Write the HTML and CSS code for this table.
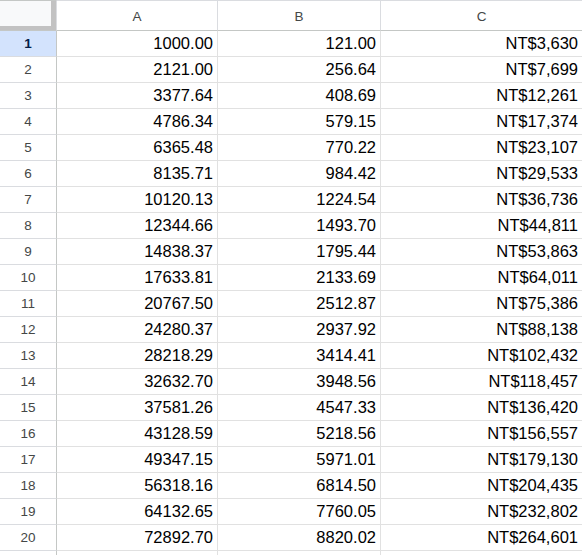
FILE: index.html
```html
<!DOCTYPE html>
<html>
<head>
<meta charset="utf-8">
<link rel="stylesheet" href="styles.css">
</head>
<body>
<div class="sheet">
  <div class="corner"></div>
  <div class="colhead">A</div>
  <div class="colhead">B</div>
  <div class="colhead">C</div>

  <div class="rowhead sel">1</div><div class="cell">1000.00</div><div class="cell">121.00</div><div class="cell">NT$3,630</div>
  <div class="rowhead">2</div><div class="cell">2121.00</div><div class="cell">256.64</div><div class="cell">NT$7,699</div>
  <div class="rowhead">3</div><div class="cell">3377.64</div><div class="cell">408.69</div><div class="cell">NT$12,261</div>
  <div class="rowhead">4</div><div class="cell">4786.34</div><div class="cell">579.15</div><div class="cell">NT$17,374</div>
  <div class="rowhead">5</div><div class="cell">6365.48</div><div class="cell">770.22</div><div class="cell">NT$23,107</div>
  <div class="rowhead">6</div><div class="cell">8135.71</div><div class="cell">984.42</div><div class="cell">NT$29,533</div>
  <div class="rowhead">7</div><div class="cell">10120.13</div><div class="cell">1224.54</div><div class="cell">NT$36,736</div>
  <div class="rowhead">8</div><div class="cell">12344.66</div><div class="cell">1493.70</div><div class="cell">NT$44,811</div>
  <div class="rowhead">9</div><div class="cell">14838.37</div><div class="cell">1795.44</div><div class="cell">NT$53,863</div>
  <div class="rowhead">10</div><div class="cell">17633.81</div><div class="cell">2133.69</div><div class="cell">NT$64,011</div>
  <div class="rowhead">11</div><div class="cell">20767.50</div><div class="cell">2512.87</div><div class="cell">NT$75,386</div>
  <div class="rowhead">12</div><div class="cell">24280.37</div><div class="cell">2937.92</div><div class="cell">NT$88,138</div>
  <div class="rowhead">13</div><div class="cell">28218.29</div><div class="cell">3414.41</div><div class="cell">NT$102,432</div>
  <div class="rowhead">14</div><div class="cell">32632.70</div><div class="cell">3948.56</div><div class="cell">NT$118,457</div>
  <div class="rowhead">15</div><div class="cell">37581.26</div><div class="cell">4547.33</div><div class="cell">NT$136,420</div>
  <div class="rowhead">16</div><div class="cell">43128.59</div><div class="cell">5218.56</div><div class="cell">NT$156,557</div>
  <div class="rowhead">17</div><div class="cell">49347.15</div><div class="cell">5971.01</div><div class="cell">NT$179,130</div>
  <div class="rowhead">18</div><div class="cell">56318.16</div><div class="cell">6814.50</div><div class="cell">NT$204,435</div>
  <div class="rowhead">19</div><div class="cell">64132.65</div><div class="cell">7760.05</div><div class="cell">NT$232,802</div>
  <div class="rowhead">20</div><div class="cell">72892.70</div><div class="cell">8820.02</div><div class="cell">NT$264,601</div>
  <div class="rowhead"></div><div class="cell"></div><div class="cell"></div><div class="cell"></div>
</div>
</body>
</html>
```
FILE: styles.css
```css
html, body {
  margin: 0;
  padding: 0;
  background: #ffffff;
  overflow: hidden;
}

.sheet {
  display: grid;
  grid-template-columns: 57px 161px 163px 202px;
  grid-auto-rows: 26px;
  grid-template-rows: 31px;
  font-family: "Liberation Sans", Arial, sans-serif;
  width: 583px;
}

.sheet > div {
  box-sizing: border-box;
  border-right: 1px solid #e1e1e1;
  border-bottom: 1px solid #e1e1e1;
  display: flex;
  align-items: center;
}

.corner {
  background: #f8f9fa;
  border-top: 1px solid #c4c7c5;
  box-shadow: inset -5px -4px 0 #c2c2c2;
}

.sheet > .corner,
.sheet > .colhead {
  border-bottom: 1px solid #c4c7c5;
  border-right: 1px solid #dadce0;
}

.colhead {
  border-top: 1px solid #dadce0;
  justify-content: center;
  font-size: 13.5px;
  color: #444746;
  padding-top: 1px;
}

.sheet > .rowhead {
  justify-content: center;
  font-size: 13.5px;
  color: #444746;
  border-right: 1px solid #c4c7c5;
  border-bottom: 1px solid #dadce0;
  padding-bottom: 1px;
}

.sheet > .rowhead.sel {
  background: #d3e3fd;
  color: #041e49;
  font-weight: bold;
}

.cell {
  justify-content: flex-end;
  padding-right: 4px;
  font-size: 16.5px;
  color: #000000;
}
```
